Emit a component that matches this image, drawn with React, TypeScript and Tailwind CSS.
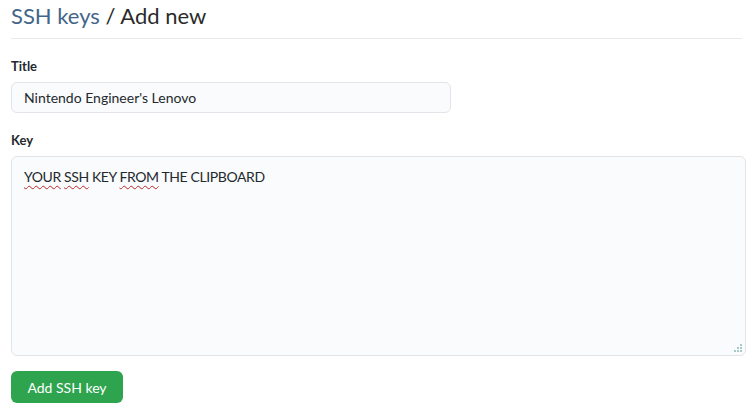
import React from "react";

export default function App() {
  const font = { fontFamily: '"Segoe UI", Lato, "Noto Sans", sans-serif' };
  return (
    <div className="min-h-[415px] w-[753px] bg-white px-[11px] text-[#24292e]" style={font}>
      <h1 className="h-[39px] border-b border-[#e7eaed] pt-[1px] text-[22px] leading-[30px] font-normal">
        <span className="text-[#43658a]">SSH keys</span>
        <span className="text-[#2b2b2b]"> / Add new</span>
      </h1>
      <div className="pt-[17px]">
        <label className="block h-[20px] text-[13px] font-bold leading-[20px] text-[#24292e]">Title</label>
        <div className="mt-[6px] flex h-[31px] w-[440px] items-center rounded-[6px] border border-[#e1e4e8] bg-[#fafbfc] px-[12px] text-[14px] text-[#24292e]">
          Nintendo Engineer's Lenovo
        </div>
        <label className="mt-[17px] block h-[20px] text-[13px] font-bold leading-[20px] text-[#24292e]">Key</label>
        <div className="relative mt-[6px] h-[200px] w-[735px] rounded-[6px] border border-[#e1e4e8] bg-[#f9fbfc] px-[12px] pt-[10px] text-[14px] leading-[20px] tracking-[-0.4px] text-[#24292e]">
          <span className="underline decoration-wavy decoration-[#c0282a] decoration-1 underline-offset-[3px]">YOUR</span>{" "}
          <span className="underline decoration-wavy decoration-[#c0282a] decoration-1 underline-offset-[3px]">SSH</span> KEY{" "}
          <span className="underline decoration-wavy decoration-[#c0282a] decoration-1 underline-offset-[3px]">FROM</span> THE CLIPBOARD
          <svg className="absolute bottom-[2px] right-[2px]" width="9" height="9" viewBox="0 0 9 9">
            <rect x="6" y="0" width="2" height="2" fill="#a9c9c9" />
            <rect x="3" y="3" width="2" height="2" fill="#a9c9c9" />
            <rect x="6" y="3" width="2" height="2" fill="#a9c9c9" />
            <rect x="0" y="6" width="2" height="2" fill="#a9c9c9" />
            <rect x="3" y="6" width="2" height="2" fill="#a9c9c9" />
            <rect x="6" y="6" width="2" height="2" fill="#a9c9c9" />
          </svg>
        </div>
        <button className="mt-[15px] flex h-[32px] w-[112px] items-center justify-center rounded-[6px] bg-[#2ea44f] text-[14px] text-white">
          Add SSH key
        </button>
      </div>
    </div>
  );
}
